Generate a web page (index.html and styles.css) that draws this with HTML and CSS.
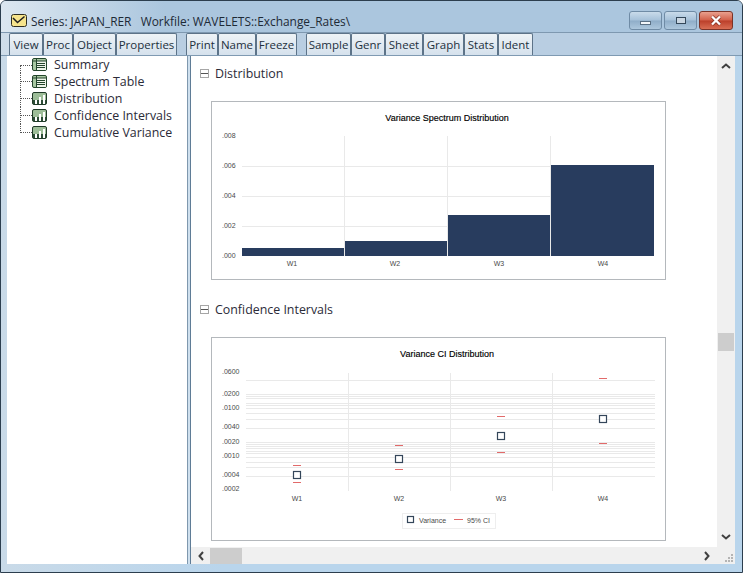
FILE: index.html
```html
<!DOCTYPE html>
<html lang="en">
<head>
    <meta charset="UTF-8">
    <meta name="viewport" content="width=device-width, initial-scale=1.0">
    <title>Series: JAPAN_RER</title>
    <link rel="stylesheet" href="styles.css">
</head>
<body>
    <div class="window">
        <div class="titlebar">
            <svg class="app-icon" width="16" height="13" viewBox="0 0 16 13">
                <rect x="0.5" y="0.5" width="15" height="12" rx="2" fill="#f6e48c" stroke="#2e2e22"/>
                <path d="M2 4 L6.5 8.5 L13.5 2.5" fill="none" stroke="#1e1e1e" stroke-width="1.5"/>
            </svg>
            <span class="title-text">Series: JAPAN_RER&nbsp;&nbsp; Workfile: WAVELETS::Exchange_Rates\</span>
            <div class="controls">
                <div class="control"><span class="glyph-min"></span></div>
                <div class="control"><span class="glyph-max"></span></div>
                <div class="control close">
                    <svg width="14" height="11" viewBox="0 0 14 11"><path d="M3 1.5 L11 9.5 M11 1.5 L3 9.5" stroke="#7d2a1c" stroke-width="3.6"/><path d="M3 1.5 L11 9.5 M11 1.5 L3 9.5" stroke="#fff" stroke-width="2.4"/></svg>
                </div>
            </div>
        </div>

        <div class="toolbar">
            <div class="btn-group">
                <button class="tool-btn w-view">View</button>
                <button class="tool-btn w-proc">Proc</button>
                <button class="tool-btn w-object">Object</button>
                <button class="tool-btn w-properties">Properties</button>
            </div>
            <div class="btn-group">
                <button class="tool-btn w-print">Print</button>
                <button class="tool-btn w-name">Name</button>
                <button class="tool-btn w-freeze">Freeze</button>
            </div>
            <div class="btn-group">
                <button class="tool-btn w-sample">Sample</button>
                <button class="tool-btn w-genr">Genr</button>
                <button class="tool-btn w-sheet">Sheet</button>
                <button class="tool-btn w-graph">Graph</button>
                <button class="tool-btn w-stats">Stats</button>
                <button class="tool-btn w-ident">Ident</button>
            </div>
        </div>

        <div class="panes">
            <ul class="tree">
                <li class="tree-row first">
                    <span class="branch"></span>
                    <svg class="tree-icon" width="15" height="13" viewBox="0 0 15 13">
                        <rect x="0.5" y="0.5" width="14" height="12" rx="1.5" fill="#a8c8a2" stroke="#24452c"/>
                        <rect x="5" y="3" width="9" height="9" fill="#eef5ea"/>
                        <path d="M4.5 1 V12 M1 3 H14 M5 5.5 H13 M5 7.5 H13 M5 9.5 H13" stroke="#24452c"/>
                    </svg>
                    <span>Summary</span>
                </li>
                <li class="tree-row">
                    <span class="branch"></span>
                    <svg class="tree-icon" width="15" height="13" viewBox="0 0 15 13">
                        <rect x="0.5" y="0.5" width="14" height="12" rx="1.5" fill="#a8c8a2" stroke="#24452c"/>
                        <rect x="5" y="3" width="9" height="9" fill="#eef5ea"/>
                        <path d="M4.5 1 V12 M1 3 H14 M5 5.5 H13 M5 7.5 H13 M5 9.5 H13" stroke="#24452c"/>
                    </svg>
                    <span>Spectrum Table</span>
                </li>
                <li class="tree-row">
                    <span class="branch"></span>
                    <svg class="tree-icon" width="15" height="13" viewBox="0 0 15 13">
                        <rect x="0.5" y="0.5" width="14" height="12" rx="1.5" fill="#9dbd98" stroke="#1f3a28"/>
                        <path d="M1 12 V8 H14 V12 Z" fill="#2c4c36"/>
                        <path d="M3 12 V8 H5 V12 Z M7 12 V5 H9 V12 Z M11 12 V3 H13 V12 Z" fill="#fff"/>
                    </svg>
                    <span>Distribution</span>
                </li>
                <li class="tree-row">
                    <span class="branch"></span>
                    <svg class="tree-icon" width="15" height="13" viewBox="0 0 15 13">
                        <rect x="0.5" y="0.5" width="14" height="12" rx="1.5" fill="#9dbd98" stroke="#1f3a28"/>
                        <path d="M1 12 V8 H14 V12 Z" fill="#2c4c36"/>
                        <path d="M3 12 V8 H5 V12 Z M7 12 V5 H9 V12 Z M11 12 V3 H13 V12 Z" fill="#fff"/>
                    </svg>
                    <span>Confidence Intervals</span>
                </li>
                <li class="tree-row last">
                    <span class="branch"></span>
                    <svg class="tree-icon" width="15" height="13" viewBox="0 0 15 13">
                        <rect x="0.5" y="0.5" width="14" height="12" rx="1.5" fill="#9dbd98" stroke="#1f3a28"/>
                        <path d="M1 12 V8 H14 V12 Z" fill="#2c4c36"/>
                        <path d="M3 12 V8 H5 V12 Z M7 12 V5 H9 V12 Z M11 12 V3 H13 V12 Z" fill="#fff"/>
                    </svg>
                    <span>Cumulative Variance</span>
                </li>
            </ul>

            <div class="splitter"></div>

            <div class="viewer">
                <div class="content">
                    <div class="section-head first"><span class="collapse"></span>Distribution</div>
                    <div class="chart-card chart-one">
                        <svg width="453" height="177" viewBox="0 0 453 177">
                            <text class="chart-title" x="235" y="19" text-anchor="middle">Variance Spectrum Distribution</text>
                            <path class="grid" d="M30 64.5 H442 M30 94.5 H442 M30 124.5 H442 M132.5 34 V154 M235.5 34 V154 M338.5 34 V154"/>
                            <rect class="bar" x="30" y="146" width="102" height="8"/>
                            <rect class="bar" x="133" y="139" width="102" height="15"/>
                            <rect class="bar" x="236" y="113" width="102" height="41"/>
                            <rect class="bar" x="339" y="63" width="103" height="91"/>
                            <text class="tick" x="10" y="36">.008</text>
                            <text class="tick" x="10" y="66">.006</text>
                            <text class="tick" x="10" y="95.5">.004</text>
                            <text class="tick" x="10" y="125.5">.002</text>
                            <text class="tick" x="10" y="155.5">.000</text>
                            <text class="tick" x="80" y="164" text-anchor="middle">W1</text>
                            <text class="tick" x="183" y="164" text-anchor="middle">W2</text>
                            <text class="tick" x="287" y="164" text-anchor="middle">W3</text>
                            <text class="tick" x="391" y="164" text-anchor="middle">W4</text>
                        </svg>
                    </div>

                    <div class="section-head"><span class="collapse"></span>Confidence Intervals</div>
                    <div class="chart-card chart-two">
                        <svg width="453" height="201" viewBox="0 0 453 201">
                            <text class="chart-title" x="235" y="19" text-anchor="middle">Variance CI Distribution</text>
                            <path class="grid" d="M34 42.5 H443 M34 56.5 H443 M34 58.5 H443 M34 60.5 H443 M34 65.5 H443 M34 67.5 H443 M34 70.5 H443 M34 75.5 H443 M34 81.5 H443 M34 90.5 H443 M34 104.5 H443 M34 106.5 H443 M34 108.5 H443 M34 110.5 H443 M34 113.5 H443 M34 115.5 H443 M34 119.5 H443 M34 124.5 H443 M34 129.5 H443 M34 138.5 H443 M136.5 35 V153 M238.5 35 V153 M340.5 35 V153"/>
                            <path class="ci" d="M81 127.5 H89 M81 144.5 H89 M183 107.5 H191 M183 131.5 H191 M285 78.5 H293 M285 114.5 H293 M387 40.5 H395 M387 105.5 H395"/>
                            <rect class="marker" x="81.5" y="133.5" width="7" height="7"/>
                            <rect class="marker" x="183.5" y="117.5" width="7" height="7"/>
                            <rect class="marker" x="285.5" y="94.5" width="7" height="7"/>
                            <rect class="marker" x="387.5" y="77.5" width="7" height="7"/>
                            <text class="tick" x="10" y="36">.0600</text>
                            <text class="tick" x="10" y="58">.0200</text>
                            <text class="tick" x="10" y="72">.0100</text>
                            <text class="tick" x="10" y="91">.0040</text>
                            <text class="tick" x="10" y="105.5">.0020</text>
                            <text class="tick" x="10" y="120">.0010</text>
                            <text class="tick" x="10" y="139">.0004</text>
                            <text class="tick" x="10" y="153">.0002</text>
                            <text class="tick" x="85" y="162.5" text-anchor="middle">W1</text>
                            <text class="tick" x="187" y="162.5" text-anchor="middle">W2</text>
                            <text class="tick" x="289" y="162.5" text-anchor="middle">W3</text>
                            <text class="tick" x="391" y="162.5" text-anchor="middle">W4</text>
                            <rect class="legend-box" x="190.5" y="175.5" width="93" height="15"/>
                            <rect class="marker" x="195.5" y="178.5" width="6" height="6"/>
                            <text class="tick" x="207" y="184.5">Variance</text>
                            <path class="ci" d="M242 181.5 H251"/>
                            <text class="tick" x="255" y="184.5">95% CI</text>
                        </svg>
                    </div>
                </div>

                <div class="vscroll">
                    <svg class="arrow" width="10" height="6" viewBox="0 0 10 6"><path d="M1 5 L5 1.5 L9 5" fill="none" stroke="#404040" stroke-width="2"/></svg>
                    <div class="vthumb"></div>
                    <svg class="arrow" width="10" height="6" viewBox="0 0 10 6"><path d="M1 1 L5 4.5 L9 1" fill="none" stroke="#404040" stroke-width="2"/></svg>
                </div>

                <div class="hscroll">
                    <svg class="arrow" width="6" height="10" viewBox="0 0 6 10"><path d="M5 1 L1.5 5 L5 9" fill="none" stroke="#404040" stroke-width="2"/></svg>
                    <div class="hthumb"></div>
                    <svg class="arrow" width="6" height="10" viewBox="0 0 6 10"><path d="M1 1 L4.5 5 L1 9" fill="none" stroke="#404040" stroke-width="2"/></svg>
                </div>

                <div class="corner">
                    <svg width="10" height="10" viewBox="0 0 10 10"><path d="M7 1 h2 v2 h-2 Z M4 4 h2 v2 h-2 Z M7 4 h2 v2 h-2 Z M1 7 h2 v2 h-2 Z M4 7 h2 v2 h-2 Z M7 7 h2 v2 h-2 Z" fill="#b4b4b4"/></svg>
                </div>
            </div>
        </div>
    </div>
</body>
</html>
```

FILE: styles.css
```css
* {
    box-sizing: border-box;
}

body {
    margin: 0;
    font-family: "Open Sans", Arial, sans-serif;
    background-color: #fff;
}

.window {
    width: 743px;
    height: 573px;
    display: flex;
    flex-direction: column;
    overflow: hidden;
    border: 1px solid #2c3e4e;
    border-radius: 6px 6px 0 0;
    background: linear-gradient(to right, #c9dae8, #b9d5ec 30%);
}

/* title bar */
.titlebar {
    height: 32px;
    flex-shrink: 0;
    display: flex;
    align-items: center;
    padding: 8px 9px 0 10px;
    background: linear-gradient(to right, #dce7f0, #abc6de 22%);
    border-bottom: 1px solid #7e98b0;
}

.app-icon {
    margin-right: 4px;
}

.title-text {
    font-size: 11.9px;
    color: #1d2a36;
}

.controls {
    margin-left: auto;
    display: flex;
    gap: 2px;
}

.control {
    width: 33px;
    height: 19px;
    display: flex;
    align-items: center;
    justify-content: center;
    border: 1px solid #6f8ba5;
    border-radius: 3px;
    background: linear-gradient(to bottom, #c9dbea, #a6c1d9 48%, #8fadc8 52%, #adc7dd);
}

.control.close {
    width: 34px;
    border-color: #7a3328;
    background: linear-gradient(to bottom, #e9a08e, #d2604a 48%, #bb3f2a 52%, #d96e54);
}

.glyph-min {
    width: 11px;
    height: 4px;
    margin-top: 5px;
    background-color: #f2f6fa;
    border: 1px solid #5a6f83;
}

.glyph-max {
    width: 10px;
    height: 7px;
    background-color: #c9d6e2;
    border: 1px solid #34485a;
}

/* toolbar */
.toolbar {
    height: 23px;
    flex-shrink: 0;
    display: flex;
    gap: 9px;
    padding: 0 0 0 8px;
    background: linear-gradient(to right, #cfdde9, #b9cee2 20%);
    border-bottom: 1px solid #7f9ab2;
}

.btn-group {
    display: flex;
}

.tool-btn {
    height: 22px;
    padding: 0;
    font-family: "Open Sans", Arial, sans-serif;
    font-size: 11.5px;
    color: #22303d;
    border: 1px solid #5d7388;
    border-bottom: 0;
    border-radius: 2px 2px 0 0;
    background: linear-gradient(to bottom, #eef3f7, #d5e1ec);
}

.w-view { width: 34px; }
.w-proc { width: 30px; }
.w-object { width: 43px; }
.w-properties { width: 61px; }
.w-print { width: 32px; }
.w-name { width: 38px; }
.w-freeze { width: 41px; }
.w-sample { width: 45px; }
.w-genr { width: 34px; }
.w-sheet { width: 38px; }
.w-graph { width: 41px; }
.w-stats { width: 34px; }
.w-ident { width: 35px; }

/* panes */
.panes {
    flex: 1;
    display: flex;
    min-height: 0;
    padding: 0 7px 8px 6px;
}

.tree {
    width: 180px;
    flex-shrink: 0;
    margin: 0;
    padding: 0 0 0 13px;
    list-style-type: none;
    background-color: #fff;
    font-size: 12.4px;
    color: #2b2b38;
}

.tree-row {
    height: 17px;
    display: flex;
    align-items: center;
}

.branch {
    width: 12px;
    height: 17px;
    display: flex;
    align-items: center;
    border-left: 1px dotted #555;
}

.branch::after {
    content: "";
    width: 11px;
    border-top: 1px dotted #555;
}

.first .branch {
    height: 8px;
    align-self: flex-end;
    align-items: flex-start;
}

.last .branch {
    height: 9px;
    align-self: flex-start;
    align-items: flex-end;
}

.tree-icon {
    margin: 0 7px 0 0;
}

.splitter {
    width: 4px;
    flex-shrink: 0;
    background-color: #cfe0ee;
    border-left: 1px solid #7f98ae;
    border-right: 1px solid #5f7c96;
}

.viewer {
    flex: 1;
    min-width: 0;
    display: grid;
    grid-template-columns: 1fr 18px;
    grid-template-rows: 1fr 17px;
    background-color: #fff;
}

.content {
    overflow: hidden;
    padding: 9px 0 0 9px;
}

.section-head {
    height: 17px;
    margin-top: 21px;
    display: flex;
    align-items: center;
    font-size: 12.4px;
    color: #2b2b38;
}

.section-head.first {
    margin-top: 0;
}

.collapse {
    width: 9px;
    height: 9px;
    margin-right: 6px;
    border: 1px solid #a6a6a6;
    background: linear-gradient(#555, #555) center / 100% 1px no-repeat;
}

.chart-card {
    width: 455px;
    margin: 19px 0 0 11px;
    border: 1px solid #b4b8bc;
    background-color: #fff;
}

.chart-one {
    height: 179px;
}

.chart-two {
    height: 204px;
}

.chart-card svg {
    display: block;
}

.chart-card text {
    font-family: "Liberation Sans", Arial, sans-serif;
}

.chart-title {
    font-size: 9px;
    fill: #000;
    stroke: #000;
    stroke-width: 0.15;
}

.tick {
    font-size: 7px;
    fill: #4a4a4a;
}

.grid {
    fill: none;
    stroke: #e9e9e9;
    stroke-width: 1;
}

.bar {
    fill: #283c5e;
}

.ci {
    fill: none;
    stroke: #e26a6a;
    stroke-width: 1;
}

.marker {
    fill: #fff;
    stroke: #34465a;
    stroke-width: 1.2;
}

.legend-box {
    fill: #fff;
    stroke: #ddd;
    stroke-dasharray: 1 1;
}

/* scrollbars */
.vscroll {
    display: flex;
    flex-direction: column;
    align-items: center;
    background-color: #f0f0f0;
    padding: 7px 0;
}

.vthumb {
    width: 16px;
    height: 18px;
    margin: 264px 0 auto;
    background-color: #cdcdcd;
}

.hscroll {
    display: flex;
    align-items: center;
    padding: 0 7px;
    background-color: #f0f0f0;
}

.hthumb {
    width: 32px;
    height: 16px;
    margin: 0 auto 0 6px;
    background-color: #cdcdcd;
}

.corner {
    display: flex;
    align-items: flex-end;
    justify-content: flex-end;
    padding: 0 1px 1px 0;
    background-color: #f0f0f0;
}
```
